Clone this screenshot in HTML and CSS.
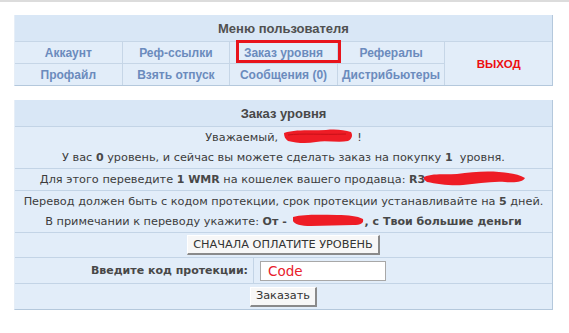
FILE: index.html
```html
<!DOCTYPE html>
<html lang="ru">
<head>
<meta charset="utf-8">
<title>Заказ уровня</title>
<link rel="stylesheet" href="styles.css">
</head>
<body>
<div class="frame">
  <div class="menu">
    <div class="menu-head">Меню пользователя</div>
    <a class="mi">Аккаунт</a>
    <a class="mi">Реф-ссылки</a>
    <a class="mi">Заказ уровня</a>
    <a class="mi">Рефералы</a>
    <a class="mi exit">ВЫХОД</a>
    <a class="mi">Профайл</a>
    <a class="mi">Взять отпуск</a>
    <a class="mi">Сообщения (0)</a>
    <a class="mi">Дистрибьютеры</a>
    <div class="hl"></div>
  </div>

  <div class="order">
    <div class="order-head">Заказ уровня</div>
    <div class="cell two">
      <div>Уважаемый, <svg class="scr s1" width="72" height="18" viewBox="0 0 72 18"><path d="M2 6 C14 2 30 4 44 3 C54 2 62 3 69 5 C71 8 70 12 66 14 C56 16 44 13 34 15 C24 17 14 16 6 14 C3 12 2 9 2 6 Z" fill="#ee1c25"/><path d="M6 8 C20 6 40 8 64 7" stroke="#c81018" stroke-width="1" fill="none"/></svg> !</div>
      <div>У вас <b>0</b> уровень, и сейчас вы можете сделать заказ на покупку <b>1</b>&nbsp; уровня.</div>
    </div>
    <div class="cell">Для этого переведите <b>1 WMR</b> на кошелек вашего продавца: <b>R3</b><svg class="scr s2" width="104" height="18" viewBox="0 0 104 18"><path d="M1 8 C10 4 22 6 34 5 C48 3 62 2 76 3 C86 4 96 5 102 9 C100 13 92 14 82 13 C68 12 54 15 40 16 C28 17 14 15 4 13 C1 11 0 10 1 8 Z" fill="#ee1c25"/></svg></div>
    <div class="cell two">
      <div>Перевод должен быть с кодом протекции, срок протекции устанавливайте на <b>5</b> дней.</div>
      <div>В примечании к переводу укажите: <b>От - <svg class="scr s3" width="74" height="14" viewBox="0 0 74 14"><path d="M2 4 C14 1 30 2 46 2 C58 2 66 3 72 6 C73 10 70 12 62 12 C48 12 34 13 20 13 C10 13 3 11 2 8 Z" fill="#ee1c25"/></svg>, с Твои большие деньги</b></div>
    </div>
    <div class="cell btnrow"><button class="btn">СНАЧАЛА ОПЛАТИТЕ УРОВЕНЬ</button></div>
    <div class="coderow">
      <div class="cell label"><b>Введите код протекции:</b></div>
      <div class="cell field"><input class="code" type="text" value="Code"></div>
    </div>
    <div class="cell btnrow last"><button class="btn small">Заказать</button></div>
  </div>
</div>
</body>
</html>
```

FILE: styles.css
```css
html, body {
  margin: 0;
  padding: 0;
}
body {
  width: 569px;
  height: 333px;
  overflow: hidden;
  background: linear-gradient(to right, #cfe8d9, #e4f2d2);
  font-family: "Liberation Sans", Arial, sans-serif;
}
.frame {
  position: relative;
  width: 564px;
  height: 323px;
  background: #fff;
  border-top: 2px solid #dcdcdc;
  border-right: 2px solid #d6d6d6;
  border-bottom: 2px solid #d6d6d6;
  padding-top: 13px;
  padding-left: 14px;
  box-sizing: content-box;
}
.menu {
  position: relative;
  width: 537px;
  display: grid;
  grid-template-columns: repeat(5, 1fr);
  grid-template-rows: 26px 21px 21px;
  gap: 1px;
  background: #c6d6e7;
  border-right: 1px solid #b4c8dc;
  border-bottom: 1px solid #b4c8dc;
  border-left: 1px solid #e6eef7;
}
.menu-head {
  grid-column: 1 / -1;
  background: #d9e7f6;
  color: #505050;
  font-weight: bold;
  font-size: 13px;
  display: flex;
  align-items: center;
  justify-content: center;
}
.mi {
  background: #e2edf9;
  color: #6b8bbd;
  font-weight: bold;
  font-size: 12px;
  display: flex;
  align-items: center;
  justify-content: center;
}
.exit {
  grid-column: 5;
  grid-row: 2 / 4;
  color: #ec1010;
  font-size: 11.5px;
}
.hl {
  position: absolute;
  left: 221px;
  top: 25px;
  width: 105px;
  height: 23px;
  box-sizing: border-box;
  border: 3px solid #e8141c;
}
.order {
  margin-top: 14px;
  width: 537px;
  display: flex;
  flex-direction: column;
  gap: 1px;
  background: #c3d4e6;
  border-right: 1px solid #b4c8dc;
  border-bottom: 1px solid #b4c8dc;
  border-left: 1px solid #e6eef7;
  color: #3c3c3c;
  font-family: "DejaVu Sans", Verdana, sans-serif;
  font-size: 11.3px;
}
.order b { color: #484848; font-size: 11px; }
.order-head {
  height: 26px;
  background: #d9e7f6;
  color: #484848;
  font-family: "Liberation Sans", Arial, sans-serif;
  font-weight: bold;
  font-size: 13px;
  display: flex;
  align-items: center;
  justify-content: center;
}
.cell {
  background: #e2edf9;
  text-align: center;
  line-height: 20px;
  padding-top: 1px;
  white-space: nowrap;
}
.scr {
  vertical-align: middle;
  margin-top: -4px;
}
.s2 { margin-left: -2px; }
.btnrow {
  height: 24px;
  padding: 0;
  display: flex;
  align-items: center;
  justify-content: center;
}
.btnrow.last { height: 25px; }
.btn {
  font-family: "DejaVu Sans", Verdana, sans-serif;
  font-size: 11.3px;
  color: #333;
  background: #f7f7f7;
  height: 20px;
  padding: 0 5px;
  border: 1px solid #fff;
  border-right: 2px solid #8a8a8a;
  border-bottom: 2px solid #8a8a8a;
  line-height: 16px;
}
.coderow {
  display: flex;
  gap: 1px;
  height: 25px;
}
.label {
  width: 238px;
  text-align: right;
  padding: 0 5px 0 0;
  display: flex;
  align-items: center;
  justify-content: flex-end;
  box-sizing: border-box;
}
.field {
  flex: 1;
  display: flex;
  align-items: center;
  padding: 0 0 0 6px;
  text-align: left;
}
.code {
  width: 126px;
  height: 20px;
  box-sizing: border-box;
  border: 1px solid #a8a8a8;
  background: #fff;
  color: #e8202a;
  font-family: "DejaVu Sans", Verdana, sans-serif;
  font-size: 13.5px;
  padding: 0 0 0 7px;
  margin: 0;
}
```
